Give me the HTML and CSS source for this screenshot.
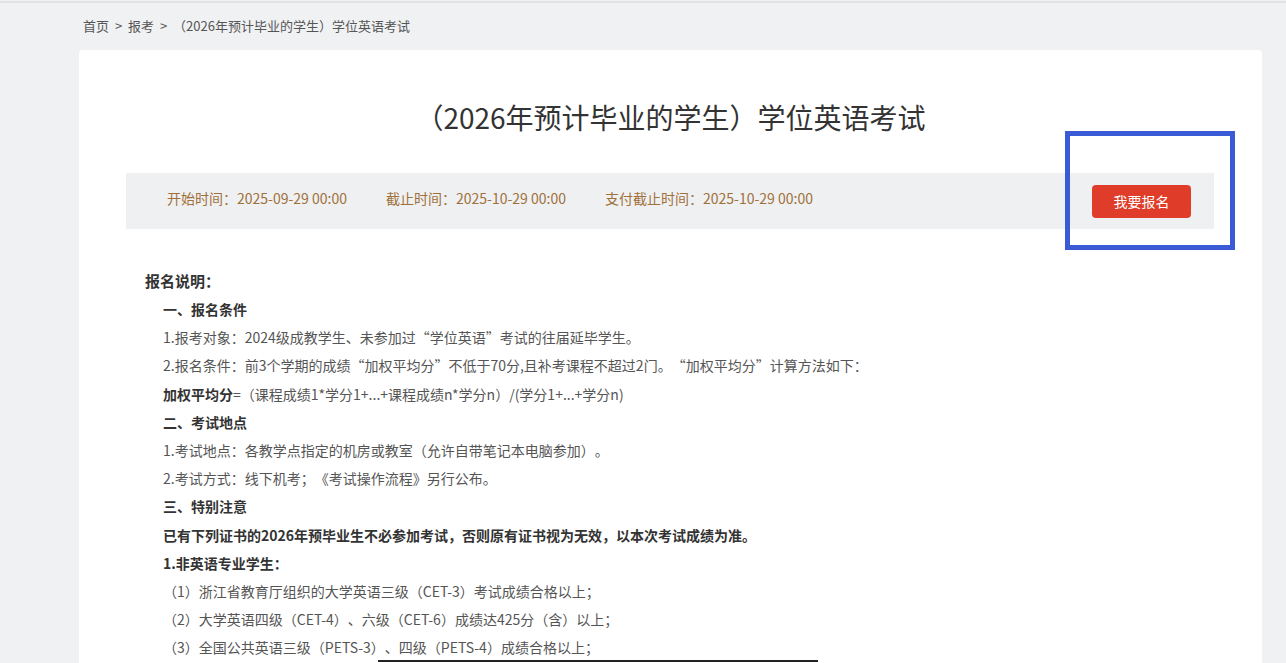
FILE: index.html
```html
<!DOCTYPE html>
<html lang="zh-CN">
<head>
<meta charset="utf-8">
<title>学位英语考试</title>
<link rel="stylesheet" href="styles.css">
</head>
<body>
<div class="page">
  <div class="crumb">首页 &gt; 报考 &gt; （2026年预计毕业的学生）学位英语考试</div>
  <div class="card">
    <h1 class="title">（2026年预计毕业的学生）学位英语考试</h1>
    <div class="bar">
      <div class="times">
        <span class="time">开始时间：2025-09-29 00:00</span>
        <span class="time">截止时间：2025-10-29 00:00</span>
        <span class="time">支付截止时间：2025-10-29 00:00</span>
      </div>
      <button class="signup">我要报名</button>
    </div>
    <div class="desc">
      <div class="desc-head">报名说明：</div>
      <div class="desc-body">
        <p class="b">一、报名条件</p>
        <p>1.报考对象：2024级成教学生、未参加过“学位英语”考试的往届延毕学生。</p>
        <p>2.报名条件：前3个学期的成绩“加权平均分”不低于70分,且补考课程不超过2门。“加权平均分”计算方法如下：</p>
        <p><b>加权平均分</b>=（课程成绩1*学分1+...+课程成绩n*学分n）/(学分1+...+学分n)</p>
        <p class="b">二、考试地点</p>
        <p>1.考试地点：各教学点指定的机房或教室（允许自带笔记本电脑参加）。</p>
        <p>2.考试方式：线下机考；《考试操作流程》另行公布。</p>
        <p class="b">三、特别注意</p>
        <p class="b">已有下列证书的2026年预毕业生不必参加考试，否则原有证书视为无效，以本次考试成绩为准。</p>
        <p class="b">1.非英语专业学生：</p>
        <p>（1）浙江省教育厅组织的大学英语三级（CET-3）考试成绩合格以上；</p>
        <p>（2）大学英语四级（CET-4）、六级（CET-6）成绩达425分（含）以上；</p>
        <p>（3）全国公共英语三级（PETS-3）、四级（PETS-4）成绩合格以上；</p>
      </div>
    </div>
  </div>
</div>
<div class="highlight"></div>
<div class="edge-line"></div>
</body>
</html>
```
FILE: styles.css
```css
html, body {
  margin: 0;
  padding: 0;
}
body {
  background: #f0f1f3;
  font-family: "Noto Sans CJK SC", "Noto Sans", sans-serif;
  color: #555;
  height: 663px;
  overflow: hidden;
  position: relative;
  text-spacing-trim: space-all;
}
.page {
  border-top: 2px solid #e2e3e5;
  margin-top: 1px;
}
.crumb {
  padding: 13px 0 0 83px;
  font-size: 13px;
  line-height: 20px;
  color: #555;
  word-spacing: 3px;
}
.card {
  margin: 14px 0 0 79px;
  width: 1183px;
  background: #fff;
  border-radius: 4px;
  padding-top: 47px;
  height: 700px;
  box-sizing: border-box;
}
.title {
  margin: 0;
  text-align: center;
  font-size: 28px;
  line-height: 40px;
  font-weight: normal;
  color: #333;
}
.bar {
  margin: 36px 48px 0 47px;
  height: 56px;
  background: #eff0f2;
  display: flex;
  align-items: center;
  justify-content: space-between;
  padding: 0 23px 0 41px;
}
.times {
  display: flex;
  gap: 39px;
  padding-bottom: 6px;
}
.time {
  font-size: 14px;
  color: #a0703a;
}
.signup {
  width: 99px;
  height: 33px;
  border: none;
  border-radius: 4px;
  background: #e03c2a;
  color: #fff;
  font-family: inherit;
  font-size: 14px;
  padding: 0;
}
.desc {
  padding: 38px 0 0 66px;
}
.desc-head {
  font-size: 15px;
  font-weight: bold;
  color: #333;
  line-height: 28px;
}
.desc-body {
  padding-left: 18px;
}
.desc-body p {
  margin: 0;
  font-size: 14px;
  line-height: 28.2px;
  color: #555;
}
.desc-body p.b, .desc-body b {
  font-weight: bold;
  color: #333;
}
.highlight {
  position: absolute;
  left: 1065px;
  top: 131px;
  width: 170px;
  height: 119px;
  border: 5px solid #3a5ad6;
  box-sizing: border-box;
}
.edge-line {
  position: absolute;
  left: 378px;
  top: 660px;
  width: 440px;
  height: 2px;
  background: #222;
}
```
